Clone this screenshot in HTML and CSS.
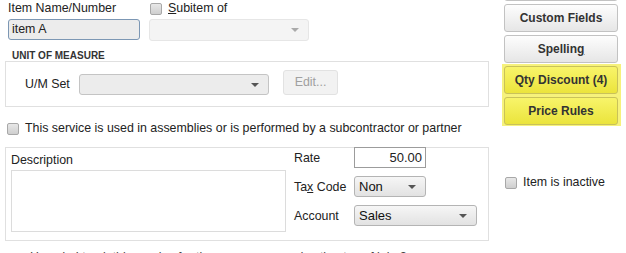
FILE: index.html
```html
<!DOCTYPE html>
<html lang="en">
<head>
    <meta charset="UTF-8">
    <title>Edit Item</title>
    <link rel="stylesheet" href="styles.css">
</head>
<body>
    <div class="page">
        <div class="main">
            <div class="top-row">
                <div class="field-name">
                    <label class="lbl">Item Name/Number</label>
                    <div class="text-input">item A</div>
                </div>
                <div class="field-sub">
                    <div class="check-row">
                        <span class="check"></span>
                        <span><u>S</u>ubitem of</span>
                    </div>
                    <div class="select sub-select"><span class="arrow"></span></div>
                </div>
            </div>

            <div class="uom-title">UNIT OF MEASURE</div>
            <div class="uom-box">
                <span class="uom-label">U/M Set</span>
                <div class="select uom-select"><span class="arrow"></span></div>
                <div class="btn btn-disabled">Edit...</div>
            </div>

            <div class="check-row assembly">
                <span class="check"></span>
                <span>This service is used in assemblies or is performed by a subcontractor or partner</span>
            </div>

            <div class="desc-box">
                <div class="desc-col">
                    <div class="lbl">Description</div>
                    <div class="textarea"></div>
                </div>
                <div class="price-col">
                    <div class="price-row">
                        <span class="price-label">Rate</span>
                        <div class="text-input rate">50.00</div>
                    </div>
                    <div class="price-row">
                        <span class="price-label">Ta<u>x</u> Code</span>
                        <div class="select tax">Non<span class="arrow"></span></div>
                    </div>
                    <div class="price-row">
                        <span class="price-label">Account</span>
                        <div class="select account">Sales<span class="arrow"></span></div>
                    </div>
                </div>
            </div>

            <div class="footer-text">How do I track this service for time, expenses and estimates of jobs?</div>
        </div>

        <div class="side">
            <div class="btn side-btn">Notes</div>
            <div class="btn side-btn">Custom Fields</div>
            <div class="btn side-btn">Spellin<u>g</u></div>
            <div class="highlight">
                <div class="btn side-btn yellow">Qty Discount (4)</div>
                <div class="btn side-btn yellow">Price Rules</div>
            </div>
            <div class="check-row inactive">
                <span class="check"></span>
                <span>Item is inactive</span>
            </div>
        </div>
    </div>
</body>
</html>
```

FILE: styles.css
```css
body {
    margin: 0;
    background: #fff;
    font-family: "Liberation Sans", Arial, sans-serif;
    font-size: 12.4px;
    color: #222;
    height: 253px;
    overflow: hidden;
}
.page {
    display: flex;
}
.main {
    width: 489px;
}
u {
    text-decoration: underline;
}
.lbl {
    display: block;
    line-height: 15px;
}
.top-row {
    display: flex;
    padding: 1px 0 0 8px;
    height: 40px;
}
.field-name {
    width: 132px;
}
.text-input {
    box-sizing: border-box;
    height: 21px;
    margin-top: 3px;
    padding: 0 3px;
    line-height: 19px;
    border: 1px solid #7c97b4;
    border-radius: 3px;
    background: #ececec;
}
.field-sub {
    margin-left: 9px;
}
.check-row {
    display: flex;
    align-items: center;
    gap: 6px;
    line-height: 15px;
}
.check {
    box-sizing: border-box;
    width: 12px;
    height: 12px;
    border: 1px solid #a8a8a8;
    border-radius: 2px;
    background: linear-gradient(#e8e8e8, #cfcfcf);
}
.field-sub .check-row {
    margin-left: 1px;
}
.select {
    box-sizing: border-box;
    position: relative;
    height: 21px;
    padding: 0 4px;
    line-height: 19px;
    border: 1px solid #b4b4b4;
    border-radius: 3px;
    background: linear-gradient(#f6f6f6, #e2e2e2);
    color: #111;
}
.arrow {
    position: absolute;
    right: 9px;
    top: 8px;
    border-left: 4px solid transparent;
    border-right: 4px solid transparent;
    border-top: 4px solid #555;
}
.sub-select {
    width: 160px;
    height: 22px;
    margin-top: 3px;
    border-color: #e6e6e6;
    background: #f4f4f4;
}
.sub-select .arrow {
    border-top-color: #aaa;
}
.uom-title {
    margin: 10px 0 0 12px;
    font-size: 10px;
    font-weight: bold;
    line-height: 10px;
    color: #333;
}
.uom-box {
    box-sizing: border-box;
    display: flex;
    align-items: center;
    margin-left: 5px;
    width: 484px;
    height: 46px;
    border: 1px solid #e0e0e0;
}
.uom-label {
    margin-left: 19px;
    width: 54px;
}
.uom-select {
    width: 190px;
    border-color: #c4c4c4;
    background: #ececec;
}
.btn {
    box-sizing: border-box;
    text-align: center;
    border: 1px solid #c2c2c2;
    border-radius: 3px;
    background: linear-gradient(#fdfdfd, #e6e6e6);
}
.btn-disabled {
    width: 55px;
    height: 25px;
    margin: -4px 0 0 14px;
    line-height: 23px;
    color: #a0a0a0;
    border-color: #e2e2e2;
    background: #f2f2f2;
}
.assembly {
    margin: 14px 0 0 7px;
    color: #222;
}
.desc-box {
    box-sizing: border-box;
    display: flex;
    margin: 11px 0 0 5px;
    width: 484px;
    height: 94px;
    border: 1px solid #e0e0e0;
}
.desc-col {
    margin-left: 5px;
    padding-top: 5px;
}
.textarea {
    box-sizing: border-box;
    width: 275px;
    height: 62px;
    margin-top: 2px;
    border: 1px solid #dcdcdc;
}
.price-col {
    margin-left: 8px;
    margin-top: -1px;
}
.price-row {
    display: flex;
    align-items: center;
    margin-bottom: 8px;
}
.price-row:nth-child(3) {
    margin-top: 1px;
}
.price-label {
    width: 60px;
}
.rate {
    width: 72px;
    margin-top: 0;
    border-color: #9c9c9c;
    border-radius: 0;
    background: #fff;
    text-align: right;
    font-size: 13px;
}
.tax {
    width: 72px;
    font-size: 13px;
}
.account {
    width: 123px;
    font-size: 13px;
}
.footer-text {
    margin: 9px 0 0 30px;
    color: #444;
    white-space: nowrap;
}
.side {
    margin-left: 15px;
    width: 114px;
    margin-top: -27px;
}
.side-btn {
    height: 28px;
    margin-bottom: 3px;
    line-height: 26px;
    font-size: 12px;
    font-weight: bold;
    color: #333;
}
.highlight {
    margin: -2px -3px 0 -2px;
    padding: 2px 3px 1px 2px;
    background: #f6f27c;
}
.yellow {
    border-color: #c9c25a;
    background: linear-gradient(#f8f46a, #ebe43c);
}
.highlight .yellow:last-child {
    margin-bottom: 0;
}
.inactive {
    margin: 49px 0 0 1px;
}
```
